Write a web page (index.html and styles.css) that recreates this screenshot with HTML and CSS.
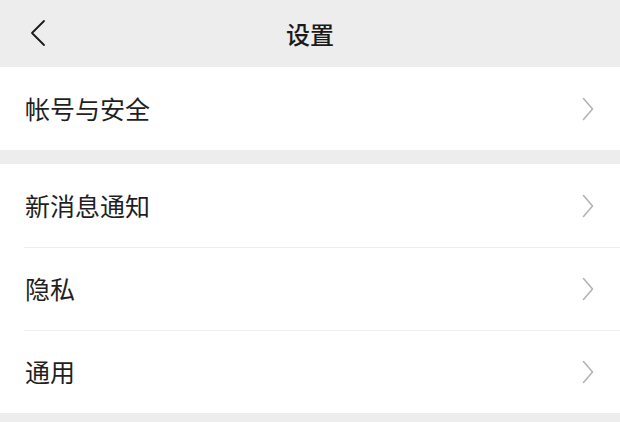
FILE: index.html
```html
<!DOCTYPE html>
<html lang="zh-CN">
<head>
<meta charset="utf-8">
<title>设置</title>
<link rel="stylesheet" href="styles.css">
</head>
<body>
<header class="topbar">
  <span class="back">
    <svg width="16" height="28" viewBox="0 0 16 28"><polyline points="14,2 2,14 14,26" fill="none" stroke="#1a1a1a" stroke-width="1.8" stroke-linecap="round" stroke-linejoin="round"/></svg>
  </span>
  <h1 class="title">设置</h1>
</header>
<main>
  <section class="group">
    <div class="row"><span class="label">帐号与安全</span><svg class="arrow" width="12" height="24" viewBox="0 0 12 24"><polyline points="1.5,1.5 10.5,12 1.5,22.5" fill="none" stroke="#b3b3b3" stroke-width="1.6" stroke-linecap="round" stroke-linejoin="round"/></svg></div>
  </section>
  <section class="group">
    <div class="row"><span class="label">新消息通知</span><svg class="arrow" width="12" height="24" viewBox="0 0 12 24"><polyline points="1.5,1.5 10.5,12 1.5,22.5" fill="none" stroke="#b3b3b3" stroke-width="1.6" stroke-linecap="round" stroke-linejoin="round"/></svg></div>
    <div class="row divided"><span class="label">隐私</span><svg class="arrow" width="12" height="24" viewBox="0 0 12 24"><polyline points="1.5,1.5 10.5,12 1.5,22.5" fill="none" stroke="#b3b3b3" stroke-width="1.6" stroke-linecap="round" stroke-linejoin="round"/></svg></div>
    <div class="row divided"><span class="label">通用</span><svg class="arrow" width="12" height="24" viewBox="0 0 12 24"><polyline points="1.5,1.5 10.5,12 1.5,22.5" fill="none" stroke="#b3b3b3" stroke-width="1.6" stroke-linecap="round" stroke-linejoin="round"/></svg></div>
  </section>
</main>
</body>
</html>
```
FILE: styles.css
```css
* { box-sizing: border-box; }
html, body {
  margin: 0;
  padding: 0;
  background: #ededed;
  font-family: "Noto Sans CJK SC", "Noto Sans", sans-serif;
  color: #1a1a1a;
}
.topbar {
  height: 67px;
  display: flex;
  align-items: center;
  justify-content: center;
  position: relative;
  background: #ededed;
}
.back {
  position: absolute;
  left: 30px;
  top: 19px;
  display: flex;
}
.title {
  margin: 0;
  font-size: 24px;
  font-weight: 500;
  line-height: 1;
  color: #1a1a1a;
}
.group {
  background: #fff;
  margin-bottom: 14px;
}
.row {
  height: 83px;
  display: flex;
  align-items: center;
  justify-content: space-between;
  padding: 0 26px 0 25px;
  position: relative;
}
.row.divided::before {
  content: "";
  position: absolute;
  left: 24px;
  right: 0;
  top: 0;
  height: 1px;
  background: #efefef;
}
.label {
  font-size: 25px;
  line-height: 1;
  color: #1f1f1f;
}
.arrow { display: block; }
```
